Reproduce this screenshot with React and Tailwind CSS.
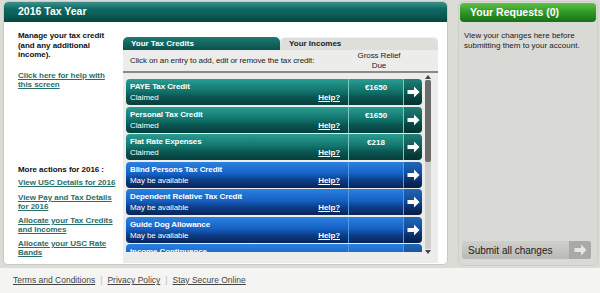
import React from "react";

const Arrow = ({ color = "#ffffff" }) => (
  <svg width="13" height="12" viewBox="0 0 13 12">
    <path d="M0.5 4h6.5V0.5L12.5 6 7 11.5V8H0.5z" fill={color} />
  </svg>
);

const rows = [
  { t: "PAYE Tax Credit", s: "Claimed", a: "€1650", c: "teal" },
  { t: "Personal Tax Credit", s: "Claimed", a: "€1650", c: "teal" },
  { t: "Flat Rate Expenses", s: "Claimed", a: "€218", c: "teal" },
  { t: "Blind Persons Tax Credit", s: "May be available", a: "", c: "blue" },
  { t: "Dependent Relative Tax Credit", s: "May be available", a: "", c: "blue" },
  { t: "Guide Dog Allowance", s: "May be available", a: "", c: "blue" },
  { t: "Income Continuance", s: "May be available", a: "", c: "blue" },
];

function Row({ r }) {
  const teal = r.c === "teal";
  const bg = teal
    ? "bg-[linear-gradient(#2a9d92_0%,#12766e_45%,#0a5550_70%,#063f3b_100%)]"
    : "bg-[linear-gradient(#2a82e0_0%,#1660c4_45%,#0c3d86_70%,#0a2456_100%)]";
  const line = teal ? "border-[#7cc9c1]" : "border-[#4f9be6]";
  return (
    <div className={`flex h-[26px] shrink-0 rounded-[4px] text-white ${bg}`}>
      <div className={`flex w-[223px] flex-col justify-center pl-[4px] pr-[8px] border-r ${line}`}>
        <div className="text-[8px] font-bold leading-[11px] tracking-[-0.1px]">{r.t}</div>
        <div className="flex justify-between text-[8px] leading-[11px] tracking-[-0.1px]">
          <span>{r.s}</span>
          <span className="font-bold underline">Help?</span>
        </div>
      </div>
      <div className={`flex w-[55px] justify-center pt-[3px] text-[8px] font-bold leading-[11px] border-r ${line}`}>
        {r.a}
      </div>
      <div className="flex flex-1 items-center justify-center rounded-r-[4px] bg-black/20">
        <Arrow />
      </div>
    </div>
  );
}

export default function App() {
  return (
    <div
      className="flex h-[293px] w-[600px] flex-col overflow-hidden bg-[#dcdcd7] text-[#111]"
      style={{ fontFamily: '"Liberation Sans", Arial, sans-serif' }}
    >
      <div className="flex h-[268px] shrink-0 gap-[12px] pl-[4px] pt-[2px]">
        {/* main panel */}
        <div className="flex h-[262px] w-[443px] flex-col overflow-hidden rounded-[4px] bg-white shadow-[0_0_0_1px_#c9c9c4]">
          <div className="flex h-[20px] shrink-0 items-center rounded-t-[4px] bg-[linear-gradient(#3f8f89_0%,#0f6a63_35%,#0b5a54_70%,#07443f_100%)] pl-[14px] text-[10.5px] font-bold text-white">
            2016 Tax Year
          </div>
          <div className="flex flex-1">
            <div className="flex w-[119px] shrink-0 flex-col pl-[14px] pr-[4px] pt-[9px] text-[8px] leading-[9.5px] tracking-[-0.05px]">
              <div className="font-bold">Manage your tax credit (and any additional income).</div>
              <div className="mt-[11px] font-bold text-[#2a6e68] underline">
                Click here for help with this screen
              </div>
              <div className="mt-[75px] font-bold">More actions for 2016 :</div>
              <div className="mt-[4px] font-bold text-[#2a6e68] underline">View USC Details for 2016</div>
              <div className="mt-[5px] font-bold text-[#2a6e68] underline">View Pay and Tax Details for 2016</div>
              <div className="mt-[4px] font-bold text-[#2a6e68] underline">
                Allocate your Tax Credits and Incomes
              </div>
              <div className="mt-[4px] font-bold text-[#2a6e68] underline">Allocate your USC Rate Bands</div>
            </div>
            <div className="mt-[15px] flex h-[226px] w-[315px] shrink-0 flex-col">
              <div className="flex h-[13px] shrink-0">
                <div className="flex w-[157px] items-center rounded-t-[5px] bg-[linear-gradient(#1b7b73,#0a524c)] pl-[8px] text-[8px] font-bold text-white">
                  Your Tax Credits
                </div>
                <div className="flex flex-1 items-center rounded-t-[5px] bg-[#dededb] pl-[9px] text-[8px] font-bold text-[#222] shadow-[inset_0_1px_0_#f4f4f2]">
                  Your Incomes
                </div>
              </div>
              <div className="flex flex-1 flex-col bg-[#ececea]">
                <div className="flex h-[23px] shrink-0 items-center justify-between border-b-2 border-[#8a8a88] pl-[7px] text-[8px] tracking-[-0.1px] text-[#222]">
                  <span>Click on an entry to add, edit or remove the tax credit:</span>
                  <span className="w-[90px] pr-[28px] text-center leading-[10px]">
                    Gross Relief
                    <br />
                    Due
                  </span>
                </div>
                <div className="flex h-[183px] pl-[3px] pt-[2px]">
                  <div className="flex h-[177px] w-[296px] flex-col gap-[1.5px] overflow-hidden pt-[4px]">
                    {rows.map((r) => (
                      <Row key={r.t} r={r} />
                    ))}
                  </div>
                  <div className="ml-[2px] flex h-[179px] w-[7px] flex-col items-center">
                    <div className="h-0 w-0 border-x-[3px] border-b-[4px] border-x-transparent border-b-[#444]" />
                    <div className="mt-[1px] flex w-[6px] flex-1 flex-col bg-[#cfcfcb]">
                      <div className="h-[82px] rounded-[2px] bg-[#6b6b69]" />
                    </div>
                    <div className="mt-[1px] h-0 w-0 border-x-[3px] border-t-[4px] border-x-transparent border-t-[#444]" />
                  </div>
                </div>
              </div>
            </div>
          </div>
        </div>
        {/* right panel */}
        <div className="flex h-[263px] w-[138px] flex-col rounded-[4px] bg-[#d9d9d5] pt-[1px] shadow-[0_0_0_1px_#cfcfca]">
          <div className="mx-[1px] flex h-[19px] shrink-0 items-center rounded-[4px] bg-[linear-gradient(#5fbf4a_0%,#36a02a_40%,#23831e_75%,#1b6f17_100%)] pl-[10px] text-[10.5px] font-bold text-white">
            Your Requests (0)
          </div>
          <div className="px-[5px] pt-[9px] text-[8px] leading-[10px] text-[#222]">
            View your changes here before submitting them to your account.
          </div>
          <div className="mt-auto mb-[6px] ml-[3px] mr-[6px] flex h-[18px] items-center rounded-[3px] bg-[linear-gradient(#cfcfcb,#b9b9b5)] text-[10px] text-[#222]">
            <span className="flex-1 pl-[6px]">Submit all changes</span>
            <span className="flex h-full w-[22px] items-center justify-center rounded-r-[3px] bg-[#a9a9a5]">
              <Arrow color="#e6e6e2" />
            </span>
          </div>
        </div>
      </div>
      <div className="flex flex-1 items-center bg-[#f4f4f2] pl-[13px] text-[8.5px] text-[#444]">
        <span className="underline">Terms and Conditions</span>
        <span className="mx-[5px] text-[#bbb]">|</span>
        <span className="underline">Privacy Policy</span>
        <span className="mx-[5px] text-[#bbb]">|</span>
        <span className="underline">Stay Secure Online</span>
      </div>
    </div>
  );
}
